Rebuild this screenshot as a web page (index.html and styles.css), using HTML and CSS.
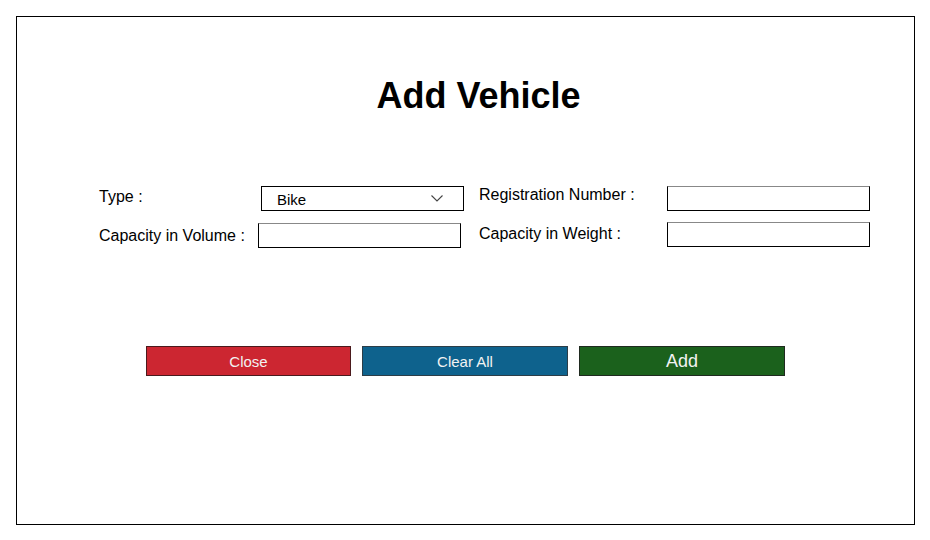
FILE: index.html
```html
<!DOCTYPE html>
<html lang="en">
<head>
<meta charset="utf-8">
<title>Add Vehicle</title>
<link rel="stylesheet" href="styles.css">
</head>
<body>
<div class="frame">
  <h1 class="title">Add Vehicle</h1>
  <div class="form">
    <div class="col col-left">
      <div class="row">
        <span class="label label-left">Type :</span>
        <div class="select">
          <span class="select-value">Bike</span>
          <svg class="chevron" width="12" height="7" viewBox="0 0 12 7"><path d="M0.5 0.5 L6 6 L11.5 0.5" fill="none" stroke="#444" stroke-width="1.1"/></svg>
        </div>
      </div>
      <div class="row row-second">
        <span class="label label-left label-volume">Capacity in Volume :</span>
        <div class="input"></div>
      </div>
    </div>
    <div class="col col-right">
      <div class="row">
        <span class="label label-right label-reg">Registration Number :</span>
        <div class="input"></div>
      </div>
      <div class="row row-second-right">
        <span class="label label-right label-weight">Capacity in Weight :</span>
        <div class="input"></div>
      </div>
    </div>
  </div>
  <div class="actions">
    <button class="btn btn-close">Close</button>
    <button class="btn btn-clear">Clear All</button>
    <button class="btn btn-add">Add</button>
  </div>
</div>
</body>
</html>
```
FILE: styles.css
```css
* { box-sizing: border-box; }
html, body { margin: 0; padding: 0; background: #fff; }
body { font-family: "Liberation Sans", Arial, sans-serif; color: #000; }

.frame {
  margin: 16px;
  width: 899px;
  height: 509px;
  border: 1px solid #000;
  padding-top: 59px;
}

.title {
  margin: 0;
  font-size: 36px;
  font-weight: bold;
  line-height: 40px;
  text-align: center;
  padding-left: 26px;
}

.form {
  display: flex;
  margin-top: 70px;
  padding-left: 82px;
  gap: 15px;
}

.col { display: flex; flex-direction: column; }

.row {
  display: flex;
  align-items: center;
  height: 25px;
}
.row-second { margin-top: 12px; }
.row-second-right { margin-top: 11px; }

.label {
  font-size: 16px;
  line-height: 18px;
  margin-top: -3px;
}
.label-left { width: 162px; }
.label-volume { width: 159px; margin-top: 0; }
.label-right { width: 188px; }
.label-reg { margin-top: -7px; }
.label-weight { margin-top: -1px; }

.select, .input {
  width: 203px;
  height: 25px;
  border: 1px solid #000;
  background: #fff;
}
.input {
  border-top-color: #888;
}
.select {
  display: flex;
  align-items: center;
  justify-content: space-between;
  padding: 0 20px 0 15px;
}
.select-value { font-size: 15px; padding-top: 1px; }
.chevron { display: block; }

.actions {
  display: flex;
  justify-content: center;
  gap: 11px;
  margin-top: 98px;
}

.btn {
  width: 206px;
  height: 30px;
  border: 1px solid #2a2a2a;
  color: #f2f2f2;
  font-family: "Liberation Sans", Arial, sans-serif;
  font-size: 15px;
  padding: 0;
}
.btn-close { width: 205px; background: #cc2631; border-color: #4a1a1d; }
.btn-clear { background: #0e628d; border-color: #2c3d47; }
.btn-add { background: #1b611c; border-color: #1f2a1f; font-size: 18px; }
```
